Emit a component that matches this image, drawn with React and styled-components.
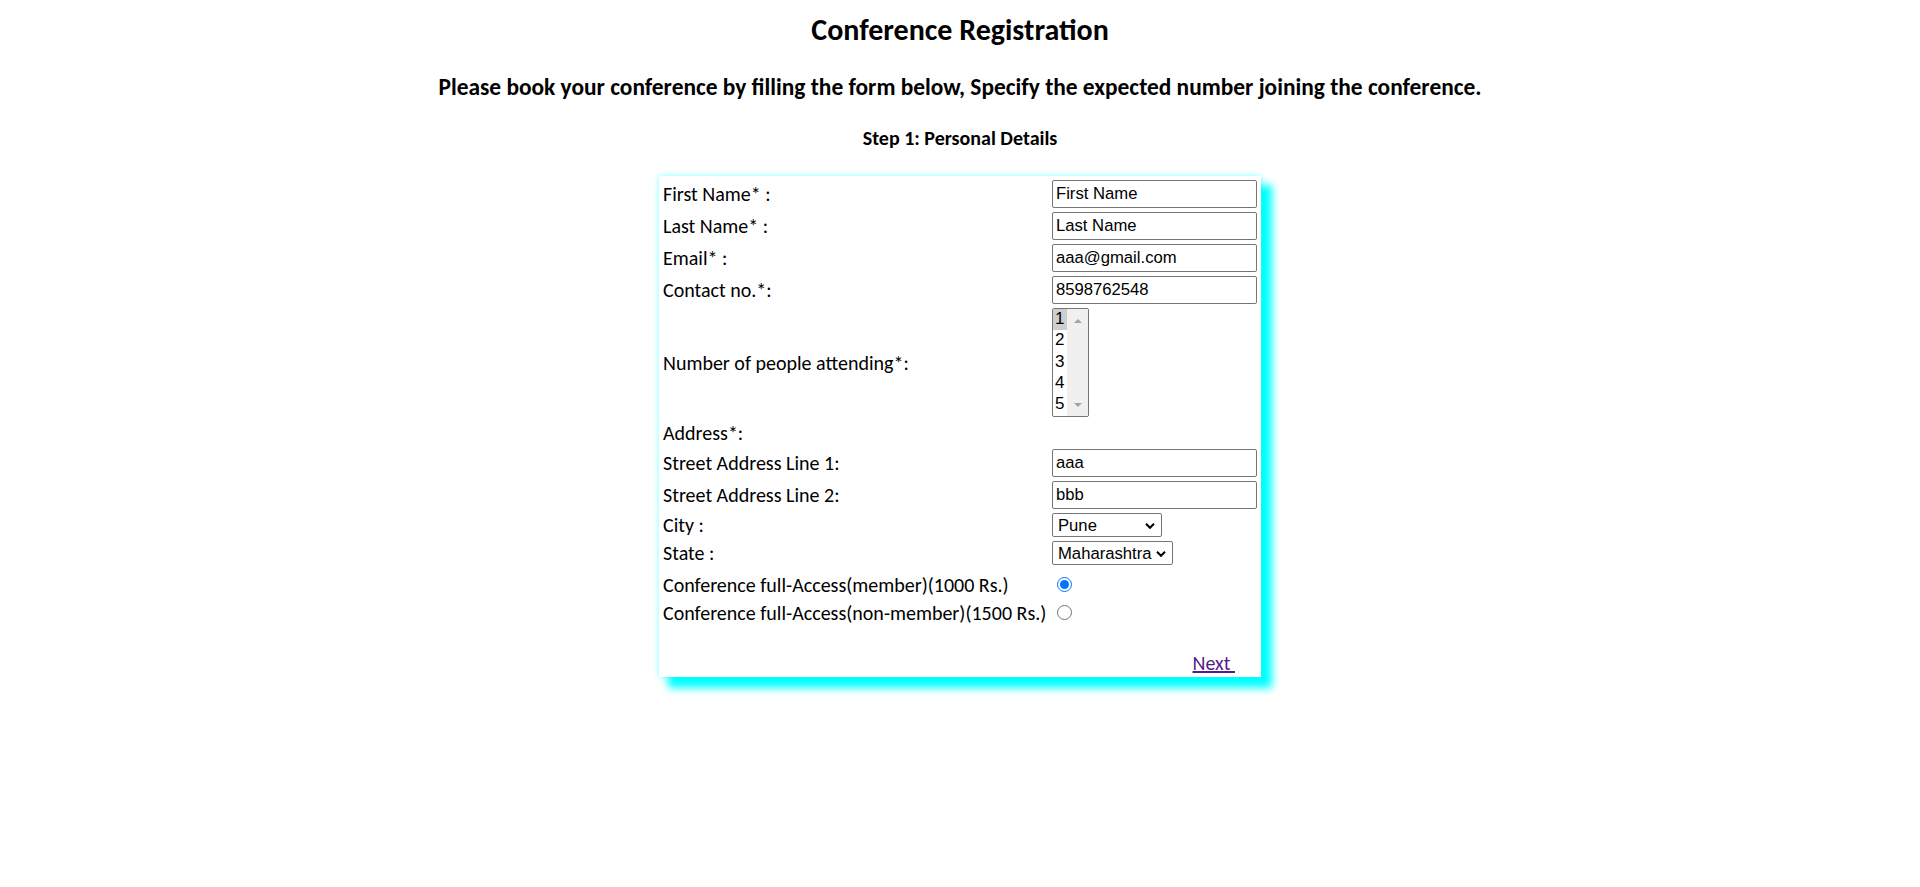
import React, { useState } from "react";
import styled, { createGlobalStyle } from "styled-components";

const GlobalStyle = createGlobalStyle`
  body {
    margin: 0;
    background: #ffffff;
    font-family: "Carlito", "Lato", sans-serif;
    color: #000000;
  }
`;

const Page = styled.div`
  display: flex;
  flex-direction: column;
  align-items: center;
  min-height: 100vh;
  box-sizing: border-box;
  padding: 11px 0 60px;
`;

const Title = styled.h2`
  margin: 0;
  font-size: 30px;
  line-height: 37px;
  font-weight: bold;
`;

const Subtitle = styled.h3`
  margin: 25px 0 0;
  font-size: 23.4px;
  line-height: 28px;
  font-weight: bold;
`;

const StepTitle = styled.h4`
  margin: 25px 0 0;
  font-size: 20px;
  line-height: 24px;
  font-weight: bold;
`;

const FormBox = styled.div`
  margin-top: 26px;
  width: 602px;
  box-sizing: border-box;
  padding: 4px 4px 2px;
  background: #ffffff;
  box-shadow: 10px 10px 8px 1px #00ffff, 0 0 6px #80ffff;
  display: grid;
  grid-template-columns: 385px 205px;
  column-gap: 4px;
  row-gap: 4px;
`;

const Label = styled.div`
  font-size: 20px;
  line-height: 24px;
  align-self: center;
  white-space: nowrap;
`;

const Cell = styled.div`
  display: flex;
  align-items: ${(p) => (p.$top ? "flex-start" : "center")};
  min-height: 24px;
`;

const TextInput = styled.input`
  width: 205px;
  height: 28px;
  box-sizing: border-box;
  margin: 0;
  padding: 0 3px;
  border: 1px solid #767676;
  border-radius: 2px;
  font-family: "Liberation Sans", Arial, sans-serif;
  font-size: 16.67px;
  color: #000000;
  outline: none;
`;

const ListBox = styled.div`
  width: 37px;
  height: 109px;
  box-sizing: border-box;
  border: 1px solid #767676;
  border-radius: 2px;
  display: flex;
  overflow: hidden;
`;

const Options = styled.div`
  width: 14px;
  display: flex;
  flex-direction: column;
`;

const Option = styled.div`
  height: 21.25px;
  line-height: 20px;
  padding-left: 2px;
  font-family: "Liberation Sans", Arial, sans-serif;
  font-size: 17px;
  background: ${(p) => (p.$selected ? "#cecece" : "transparent")};
`;

const ScrollTrack = styled.div`
  flex: 1;
  background: #f0f0f0;
  display: flex;
  flex-direction: column;
  justify-content: space-between;
  align-items: center;
  padding: 10px 0 9px;
`;

const Arrow = styled.div`
  width: 0;
  height: 0;
  border-left: 4.5px solid transparent;
  border-right: 4.5px solid transparent;
  ${(p) =>
    p.$down
      ? "border-top: 4px solid #a3a3a3;"
      : "border-bottom: 4px solid #a3a3a3;"}
`;

const SelectWrap = styled.div`
  position: relative;
  width: ${(p) => p.$width}px;
  height: 24px;
`;

const Select = styled.select`
  appearance: none;
  width: 100%;
  height: 24px;
  box-sizing: border-box;
  margin: 0;
  padding: 0 0 0 5px;
  border: 1px solid #767676;
  border-radius: 2px;
  background: #ffffff;
  font-family: "Liberation Sans", Arial, sans-serif;
  font-size: 16.67px;
  color: #000000;
  outline: none;
`;

const Chevron = styled.svg`
  position: absolute;
  right: 7px;
  top: 9px;
  pointer-events: none;
`;

const Gap = styled.div`
  grid-column: 1 / 3;
  height: ${(p) => p.$h}px;
`;

const Radio = styled.input`
  width: 15px;
  height: 15px;
  margin: 4px 0 0 5px;
`;

const NextLink = styled.a`
  justify-self: end;
  margin-right: 22px;
  font-size: 20px;
  line-height: 24px;
  color: #551a8b;
  text-decoration: underline;
`;

const people = [1, 2, 3, 4, 5];

const Dropdown = ({ width, value, options }) => (
  <SelectWrap $width={width}>
    <Select defaultValue={value}>
      {options.map((o) => (
        <option key={o}>{o}</option>
      ))}
    </Select>
    <Chevron width="10" height="8" viewBox="0 0 10 8">
      <path d="M1 1.8 L5 5.8 L9 1.8" fill="none" stroke="#000" strokeWidth="2" />
    </Chevron>
  </SelectWrap>
);

const App = () => {
  const [plan, setPlan] = useState("member");

  return (
    <Page>
      <GlobalStyle />
      <Title>Conference Registration</Title>
      <Subtitle>
        Please book your conference by filling the form below, Specify the
        expected number joining the conference.
      </Subtitle>
      <StepTitle>Step 1: Personal Details</StepTitle>
      <FormBox>
        <Label>First Name* :</Label>
        <Cell>
          <TextInput defaultValue="First Name" />
        </Cell>
        <Label>Last Name* :</Label>
        <Cell>
          <TextInput defaultValue="Last Name" />
        </Cell>
        <Label>Email* :</Label>
        <Cell>
          <TextInput defaultValue="aaa@gmail.com" />
        </Cell>
        <Label>Contact no.*:</Label>
        <Cell>
          <TextInput defaultValue="8598762548" />
        </Cell>
        <Label>Number of people attending*:</Label>
        <Cell>
          <ListBox>
            <Options>
              {people.map((n) => (
                <Option key={n} $selected={n === 1}>
                  {n}
                </Option>
              ))}
            </Options>
            <ScrollTrack>
              <Arrow />
              <Arrow $down />
            </ScrollTrack>
          </ListBox>
        </Cell>
        <Label>Address*:</Label>
        <Cell />
        <Label>Street Address Line 1:</Label>
        <Cell>
          <TextInput defaultValue="aaa" />
        </Cell>
        <Label>Street Address Line 2:</Label>
        <Cell>
          <TextInput defaultValue="bbb" />
        </Cell>
        <Label>City :</Label>
        <Cell>
          <Dropdown width={110} value="Pune" options={["Pune", "Mumbai", "Nagpur"]} />
        </Cell>
        <Label>State :</Label>
        <Cell>
          <Dropdown width={121} value="Maharashtra" options={["Maharashtra", "Goa", "Gujarat"]} />
        </Cell>
        <Gap $h={0} />
        <Label>Conference full-Access(member)(1000 Rs.)</Label>
        <Cell $top>
          <Radio
            type="radio"
            name="plan"
            checked={plan === "member"}
            onChange={() => setPlan("member")}
          />
        </Cell>
        <Label>Conference full-Access(non-member)(1500 Rs.)</Label>
        <Cell $top>
          <Radio
            type="radio"
            name="plan"
            checked={plan === "non-member"}
            onChange={() => setPlan("non-member")}
          />
        </Cell>
        <Gap $h={18} />
        <Cell />
        <NextLink href="#">Next&nbsp;</NextLink>
      </FormBox>
    </Page>
  );
};

export default App;
